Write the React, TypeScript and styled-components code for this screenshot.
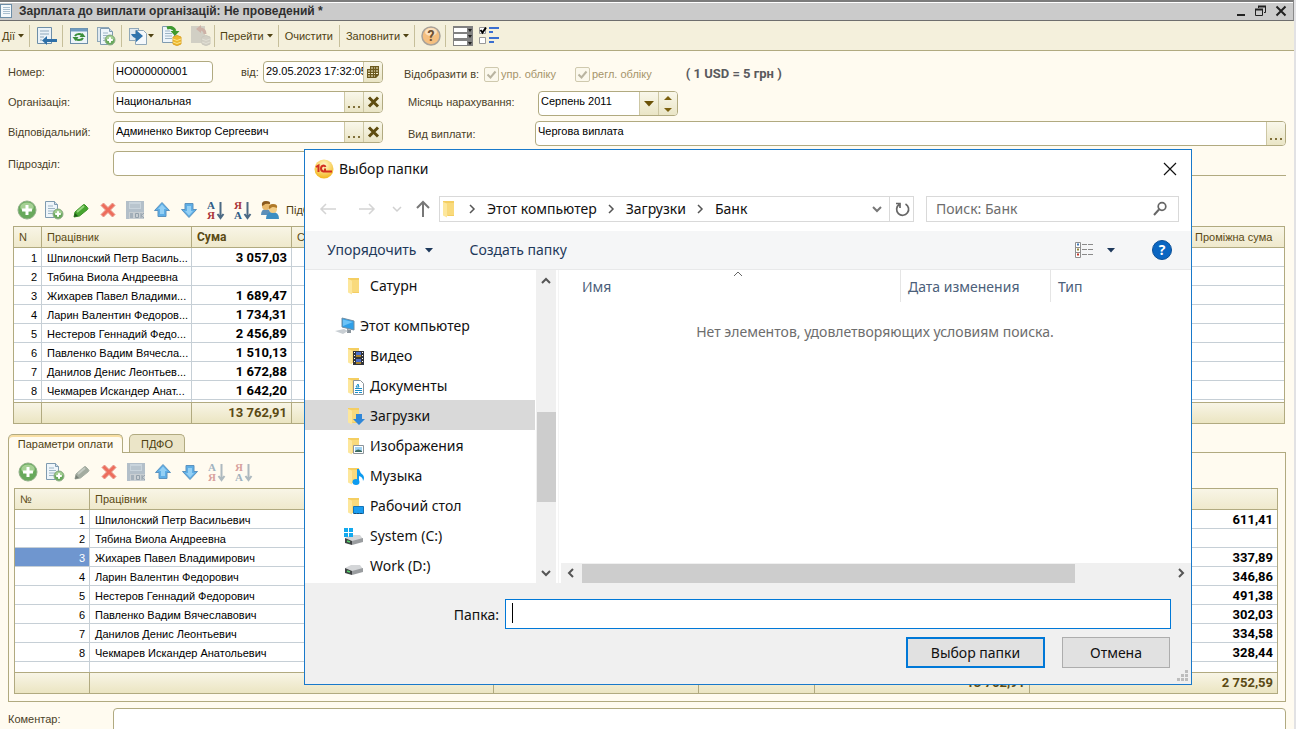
import React from "react";
import styled, { createGlobalStyle } from "styled-components";

const ui = `"Liberation Sans", Arial, sans-serif`;
const figures = `Roboto, "Liberation Sans", sans-serif`;
const shell = `"Noto Sans", "Open Sans", sans-serif`;
const line = "#b1aa80";

const Global = createGlobalStyle`
  *, *::before, *::after { box-sizing: border-box; }
  body { margin: 0; overflow: hidden; background: #fffbf0; }
  button, input { font: inherit; color: inherit; margin: 0; border-radius: 0; }
  button { padding: 0; border: 0; background: none; }
`;

const Window = styled.main`
  position: relative;
  min-height: 100vh;
  max-height: 100vh;
  overflow: hidden;
  background: #fffbf0;
  border-right: 2px solid #e2e2e4;
  font: 11px/14px ${ui};
  color: #4a4128;
`;

const TitleBar = styled.header`
  display: flex;
  align-items: center;
  height: 21px;
  padding: 0 2px 0 0;
  background: #cbcbcb;
  border-top: 2px solid #7c7c7c;
  border-bottom: 1px solid #6e6e6e;
  border-right: 1px solid #8a8a8a;
  box-shadow: inset 0 1px #fff;
  h1 { flex: 1; margin: 0 0 0 6px; font: bold 12px/16px ${ui}; color: #2f2f2f; }
`;

const WindowButton = styled.button`
  display: flex;
  width: 20px;
  height: 16px;
  align-items: center;
  justify-content: center;
`;

const MainToolbar = styled.nav`
  display: flex;
  align-items: center;
  height: 30px;
  padding-left: 2px;
  background: #f4f0dc;
  border-bottom: 1px solid ${line};
`;

const Tool = styled.button<{ $w?: number; $dim?: boolean }>`
  display: flex;
  align-items: center;
  justify-content: center;
  width: ${(p) => (p.$w ? `${p.$w}px` : "auto")};
  height: 24px;
  opacity: ${(p) => (p.$dim ? 0.45 : 1)};
  white-space: nowrap;
  color: #4f4212;
  svg { flex: none; }
`;

const Split = styled.span<{ $l: number; $r: number }>`
  width: 1px;
  height: 22px;
  margin: 0 ${(p) => p.$r}px 0 ${(p) => p.$l}px;
  background: #c6bf9a;
`;

const Form = styled.form`
  padding: 10px 8px 0;
`;

const FormRow = styled.div`
  display: flex;
  align-items: flex-start;
  height: 30px;
`;

const Label = styled.label<{ $w: number; $tall?: boolean; $gap?: number }>`
  flex: none;
  width: ${(p) => p.$w}px;
  margin-left: ${(p) => p.$gap || 0}px;
  line-height: ${(p) => (p.$tall ? 26 : 22)}px;
  white-space: nowrap;
`;

const Field = styled.div<{ $w?: number; $tall?: boolean }>`
  display: flex;
  flex: ${(p) => (p.$w ? "none" : "1")};
  width: ${(p) => (p.$w ? `${p.$w}px` : "auto")};
  height: ${(p) => (p.$tall ? 25 : 22)}px;
  background: #fff;
  border: 1px solid ${line};
  border-radius: 4px;
  overflow: hidden;
  input {
    flex: 1;
    min-width: 0;
    width: 100%;
    height: 18px;
    padding: 0 0 0 2px;
    border: 0;
    outline: 0;
    background: none;
    color: #000;
  }
`;

const FieldButton = styled.button<{ $w?: number }>`
  flex: none;
  display: flex;
  flex-direction: column;
  align-items: center;
  justify-content: center;
  width: ${(p) => p.$w || 19}px;
  background: linear-gradient(#f9f7ea, #eae5c6);
  border-left: 1px solid #cdc7a4;
`;

const Check = styled.label<{ $gap: number }>`
  display: flex;
  align-items: center;
  height: 26px;
  margin-left: ${(p) => p.$gap}px;
  color: #a5946a;
  white-space: nowrap;
  input {
    appearance: none;
    width: 15px;
    height: 15px;
    margin: 0 2px 0 0;
    border: 1px solid #cfc9ae;
    border-radius: 2px;
    background: #fbf8ec;
  }
  span { position: relative; display: flex; }
  svg { position: absolute; left: 2px; top: 3px; }
`;

const Rate = styled.strong`
  margin-left: 34px;
  font: bold 13px/26px ${figures};
  color: #5a5a5e;
`;

const GroupLine = styled.div`
  flex: 1;
  height: 25px;
  border-bottom: 1px solid ${line};
`;

const GridToolbar = styled.div<{ $h: number; $top: number; $left: number }>`
  display: flex;
  align-items: center;
  height: ${(p) => p.$h}px;
  padding: ${(p) => p.$top}px 0 0 ${(p) => p.$left}px;
`;

const DataTable = styled.table`
  width: 100%;
  table-layout: fixed;
  border-collapse: separate;
  border-spacing: 0;
  border: 1px solid ${line};
  background: #fff;
  color: #000;
  th, td {
    padding: 0 4px 0 5px;
    overflow: hidden;
    white-space: nowrap;
    text-align: left;
    border-right: 1px solid #c6cfd6;
  }
  th:last-child, td:last-child { border-right: 0; }
  th {
    height: 21px;
    font-weight: normal;
    color: #5b4a14;
    background: linear-gradient(#f8f5e6, #efe9cc);
    border-color: ${line};
    border-bottom: 1px solid ${line};
  }
  th.strong { font: bold 12px/14px ${figures}; }
  tbody td { height: 19px; padding-top: 2px; line-height: 16px; border-bottom: 1px solid #c6cfd6; }
  td.num { text-align: right; }
  td.sum { text-align: right; font-weight: bold; font-size: 13px; font-family: ${figures}; }
  td.picked { color: #fff; background: #6f96cf; }
  tfoot td {
    height: 21px;
    line-height: 20px;
    border-top: 1px solid ${line};
    border-color: ${line};
    background: linear-gradient(#f8f5e6, #ebe5c2);
    color: #5b4a14;
  }
`;

const Filler = styled.tr<{ $h: number }>`
  && td { height: ${(p) => p.$h}px; line-height: 1px; border-bottom: 0; padding: 0; }
`;

const GridArea = styled.section`
  padding: 0 9px 0 13px;
`;

const Tabs = styled.div`
  display: flex;
  align-items: flex-end;
  gap: 6px;
  height: 29px;
  margin: 0 8px -1px;
`;

const Tab = styled.button<{ $on?: boolean; $w: number }>`
  position: relative;
  width: ${(p) => p.$w}px;
  height: ${(p) => (p.$on ? 19 : 18)}px;
  margin-bottom: ${(p) => (p.$on ? 0 : 1)}px;
  border: 1px solid ${line};
  border-bottom: 0;
  border-radius: 5px 5px 0 0;
  background: ${(p) => (p.$on ? "#fffbf0" : "#ebe5c8")};
  box-shadow: ${(p) => (p.$on ? "inset 0 2px #f9dfa4" : "none")};
  color: #4f4212;
`;

const TabPanel = styled.section`
  margin: 0 8px;
  padding: 0 7px 7px 5px;
  border: 1px solid ${line};
`;

const Comment = styled.div`
  display: flex;
  padding: 6px 8px 0;
`;

/* Folder dialog */

const Dialog = styled.div`
  position: absolute;
  top: 149px;
  left: 304px;
  right: 102px;
  display: flex;
  flex-direction: column;
  background: #fff;
  border: 1px solid #1979ca;
  font: 14px/20px ${shell};
  color: #111;
`;

const DialogTitle = styled.div`
  display: flex;
  align-items: center;
  height: 37px;
  padding: 0 14px 0 9px;
  h2 { flex: 1; margin: 0 0 0 5px; font: inherit; }
`;

const IconButton = styled.button<{ $w: number; $gap?: number }>`
  display: flex;
  flex: none;
  align-items: center;
  justify-content: center;
  width: ${(p) => p.$w}px;
  height: 24px;
  margin-left: ${(p) => p.$gap || 0}px;
`;

const NavRow = styled.div`
  display: flex;
  align-items: center;
  height: 44px;
  padding: 0 12px;
`;

const Address = styled.div`
  display: flex;
  align-items: center;
  flex: 1;
  height: 26px;
  margin-left: 7px;
  padding-left: 2px;
  border: 1px solid #d9d9d9;
  color: #111;
`;

const Crumb = styled.button`
  display: flex;
  align-items: center;
  white-space: nowrap;
  svg { margin: 0 9px 0 8px; }
`;

const Refresh = styled(IconButton)`
  border-left: 1px solid #d9d9d9;
`;

const Search = styled.label`
  display: flex;
  align-items: center;
  width: 253px;
  height: 26px;
  margin-left: 12px;
  padding: 0 10px 0 9px;
  border: 1px solid #d9d9d9;
  input { flex: 1; min-width: 0; padding: 0; border: 0; outline: 0; }
  input::placeholder { color: #6d6d6d; opacity: 1; }
`;

const CommandBar = styled.div`
  display: flex;
  align-items: center;
  height: 39px;
  padding: 0 18px 0 22px;
  background: #f5f6f7;
  border-bottom: 1px solid #e8e9ea;
  color: #1e395b;
`;

const Command = styled.button`
  display: flex;
  align-items: center;
  gap: 8px;
  margin-right: 37px;
`;

const Spacer = styled.span`
  flex: 1;
`;

const DialogBody = styled.div`
  display: flex;
  height: 313px;
`;

const Tree = styled.ul`
  flex: none;
  width: 231px;
  margin: 0;
  padding: 0 1px 0 0;
  list-style: none;
`;

const TreeItem = styled.li<{ $root?: boolean; $on?: boolean; $drive?: boolean }>`
  display: flex;
  align-items: center;
  height: 30px;
  margin-top: ${(p) => (p.$root ? 10 : 0)}px;
  padding-top: 2px;
  padding-left: ${(p) => (p.$root ? 30 : p.$drive ? 39 : 42)}px;
  gap: ${(p) => (p.$root ? 5 : p.$drive ? 6 : 5)}px;
  background: ${(p) => (p.$on ? "#d9d9d9" : "transparent")};
`;

const VScroll = styled.div`
  display: flex;
  flex: none;
  flex-direction: column;
  align-items: center;
  width: 20px;
  padding: 5px 0 4px;
  background: #f0f0f0;
`;

const VTrack = styled.div`
  flex: 1;
  width: 19px;
  padding-top: 125px;
  &::before { content: ""; display: block; height: 90px; background: #cdcdcd; }
`;

const List = styled.div`
  display: flex;
  flex: 1;
  flex-direction: column;
  min-width: 0;
  margin-left: 2px;
  border-left: 1px solid #f4f4f4;
`;

const ListHead = styled.div`
  position: relative;
  display: flex;
  height: 32px;
  color: #4c607a;
  button { text-align: left; height: 32px; padding: 2px 0 0 7px; border-right: 1px solid #e5e5e5; }
  button:first-child { flex: 1; padding-left: 23px; }
  button:last-of-type { border-right: 0; }
  svg { position: absolute; left: 174px; top: 1px; }
`;

const HeadCell = styled.button<{ $w?: number }>`
  width: ${(p) => (p.$w ? `${p.$w}px` : "auto")};
`;

const Empty = styled.p`
  flex: 1;
  margin: 0;
  padding-top: 20px;
  text-align: center;
  color: #6d6d6d;
`;

const HScroll = styled.div`
  display: flex;
  align-items: center;
  height: 20px;
  margin-left: 2px;
  padding: 0 4px;
  background: #f0f0f0;
`;

const HTrack = styled.div`
  flex: 1;
  margin: 0 6px 0 5px;
  &::before { content: ""; display: block; width: 84%; height: 19px; background: #cdcdcd; }
`;

const Footer = styled.div`
  position: relative;
  padding: 16px 20px 16px 22px;
  background: #f0f0f0;
  > svg { position: absolute; right: 2px; bottom: 2px; }
`;

const FolderRow = styled.div`
  display: flex;
  align-items: center;
  label { width: 172px; padding-top: 2px; text-align: right; }
`;

const FolderField = styled.span`
  position: relative;
  flex: 1;
  margin-left: 6px;
  input { display: block; width: 100%; height: 30px; padding: 0 6px; border: 1px solid #0078d7; background: #fff; outline: 0; }
  &::after { content: ""; position: absolute; left: 7px; top: 4px; width: 1px; height: 20px; background: #000; }
`;

const Actions = styled.div`
  display: flex;
  justify-content: flex-end;
  gap: 17px;
  margin: 8px 1px 0 0;
`;

const Action = styled.button<{ $main?: boolean }>`
  width: ${(p) => (p.$main ? 139 : 108)}px;
  height: 31px;
  background: #e1e1e1;
  border: ${(p) => (p.$main ? "2px solid #0078d7" : "1px solid #adadad")};
`;

/* Icons */

const Svg = ({ w = 20, h = 20, children }: { w?: number; h?: number; children: React.ReactNode }) => (
  <svg width={w} height={h} viewBox={`0 0 ${w} ${h}`} fill="none" aria-hidden="true">{children}</svg>
);

const Caret = () => <Svg w={6} h={4}><path d="M0 0h6L3 3.500z" fill="#4f4212" /></Svg>;

const Paper = ({ x = 0, y = 0 }) => (
  <g transform={`translate(${x} ${y})`}>
    <path d="M.5.5h9l3 3v13H.5z" fill="#eef5fa" stroke="#7f9bb0" />
    <path d="M9.500.5v3h3" fill="#cfdde8" stroke="#7f9bb0" />
    <path d="M3 5h5M3 7.500h7M3 10h7M3 12.500h7" stroke="#9db5c6" />
  </g>
);

const PlusDot = ({ x = 10, y = 10, r = 9 }) => (
  <g>
    <circle cx={x} cy={y} r={r} fill="#68a95c" stroke="#92b08a" />
    <ellipse cx={x} cy={y - r / 3} rx={r * 0.75} ry={r * 0.5} fill="#a5d094" />
    <path d={`M${x - r * 0.55} ${y}h${r * 1.1}M${x} ${y - r * 0.55}v${r * 1.1}`} stroke="#fff" strokeWidth={r > 6 ? 3 : 2} />
  </g>
);

const DocIcon = () => <Svg w={13} h={15}><rect x=".5" y=".5" width="11" height="13" fill="#f4f9fc" stroke="#6d8ea8" /><path d="M3 3.500h7M3 5.500h7M3 7.500h7M3 9.500h7" stroke="#a9bfd0" /></Svg>;
const AddIcon = () => <Svg><PlusDot /></Svg>;
const CopyIcon = () => <Svg><Paper x={1} y={1} /><PlusDot x={14} y={14} r={5} /></Svg>;
const CopyStack = () => <Svg><rect x="1.500" y="1.500" width="11" height="14" fill="#dfe9f0" stroke="#8fa7b8" /><Paper x={4} y={2} /><PlusDot x={14} y={14} r={5} /></Svg>;
const PencilIcon = ({ grey }: { grey?: boolean }) => (
  <Svg>
    <path d="M3 17l1-5 8-7q1-1 2 0l2.500 2.500q1 1 0 2l-8 6.500z" fill={grey ? "#a3aca0" : "#47a52f"} stroke={grey ? "#a3aca0" : "#3c9127"} />
    <path d="M6 12l7-6" stroke={grey ? "#c5cbc3" : "#93d47a"} strokeWidth="2" />
    <path d="M3 17l1-4 3 3z" fill={grey ? "#777f76" : "#1f5a1b"} />
  </Svg>
);
const DeleteIcon = () => <Svg><path d="M3 5.500L5.500 3 10 7.500 14.500 3 17 5.500 12.500 10l4.500 4.500-2.500 2.500-4.500-4.500L5.500 17 3 14.500 7.500 10z" fill="#ee6d5c" stroke="#e79a8e" /></Svg>;
const SaveIcon = () => (
  <Svg>
    <path d="M1 1h18v18H1z" fill="#b3bfc9" /><path d="M4 2h12v7H4z" fill="#c9d4dc" /><path d="M5 5h10M5 7h10" stroke="#a9b6c0" />
    <path d="M4 12h15v7H4z" fill="#c8ced2" /><path d="M5 13h3v5H5z" fill="#a4b0ba" />
    <path d="M10.500 13.500h3v4h-3zM16 13v5M19 13l-3 2.500 3 2.500" stroke="#93a0ab" />
  </Svg>
);
const Arrow = ({ down }: { down?: boolean }) => (
  <Svg>
    <g transform={down ? "rotate(180 10 10)" : undefined}>
      <path d="M10 2.500l7.500 8h-3.500v6H6v-6H2.500z" fill="#5eaee6" stroke="#5c93bf" />
      <path d="M10 4.500l4 4.500H12v5H8V9H6z" fill="#94d0f5" />
    </g>
  </Svg>
);
const SortIcon = ({ desc }: { desc?: boolean }) => (
  <Svg h={24}>
    <g fontFamily="Liberation Serif" fontWeight="bold" fontSize="11" textAnchor="middle">
      <text x="5" y="11" fill={desc ? "#a93438" : "#2d5c86"}>{desc ? "Я" : "А"}</text>
      <text x="5" y="21" fill={desc ? "#2d5c86" : "#a93438"}>{desc ? "А" : "Я"}</text>
    </g>
    <path d="M14.500 4v16M11.500 16l3 4 3-4" stroke="#4c6a84" strokeWidth="2" />
  </Svg>
);
const PeopleIcon = () => (
  <Svg>
    <path d="M1 15q0-6 5-6t5 6z" fill="#5d8fb8" /><circle cx="6" cy="6" r="4" fill="#e9b96b" /><path d="M2 6q-1-5 4-5t4 3q-5-1-6 1z" fill="#8a5a1e" />
    <path d="M6 19q0-7 6.500-7t6.500 7z" fill="#3d8ec2" /><circle cx="13" cy="9" r="4" fill="#f3cd86" /><path d="M9 9q-1-5 4-5t4 4q-5-2-6 0z" fill="#b07a2a" />
  </Svg>
);
const PostIcon = ({ grey }: { grey?: boolean }) => (
  <Svg w={21} h={21}>
    {grey && <path d="M1 1h14v17H1z" fill="#a8a8a8" />}
    {!grey && <Paper x={1} y={1} />}
    <path d={grey ? "M15 9q0-5-5-5" : "M6 3q6-2 8 3"} stroke={grey ? "#a06868" : "#3f9a2f"} strokeWidth="3" />
    <path d={grey ? "M11 0v8L6 4z" : "M9.500 6h9L14 11z"} fill={grey ? "#a06868" : "#3f9a2f"} />
    <path d="M12 12q4-3 8 0v7q-4 3-8 0z" fill={grey ? "#a9a9a9" : "#edb92e"} stroke={grey ? "#999" : "#dca52a"} />
    <path d="M12 14q4 3 8 0M12 17q4 3 8 0" stroke={grey ? "#ccc" : "#fbe48b"} />
  </Svg>
);
const GoIcon = () => <Svg w={20}><rect x="1.500" y="2.500" width="9" height="12" fill="#dfe9f0" stroke="#8fa7b8" /><path d="M7.500 4.500h8l3 3v11h-11z" fill="#f4f8fb" stroke="#8fa7b8" /><path d="M3 8h5V4l7 6-7 6v-4Q5 12 3 8z" fill="#2f73ac" /></Svg>;
const BackDoc = () => <Svg w={21}><path d="M1.500 1.500h14v16h-14z" fill="#eaf2f8" stroke="#6d8ea8" /><path d="M4 5h9M4 8h9M4 11h4M4 14h2" stroke="#90a9bc" /><path d="M6 14.500l5-4.500v3h10v3H11v3z" fill="#2e6fa7" /></Svg>;
const ReloadDoc = () => <Svg><rect x="1.500" y="2.500" width="17" height="15" fill="#edf4f9" stroke="#6d8ea8" /><path d="M2 4h16" stroke="#6f9cc0" strokeWidth="3" /><path d="M6 10q1-2 4-2 2 0 3 1M14 12q-1 2-4 2-2 0-3-1" stroke="#3c8f3c" strokeWidth="2" /><path d="M10.500 11h6l-3-4zM9.500 11h-6l3 4z" fill="#3c8f3c" /></Svg>;
const HelpIcon = () => <Svg><circle cx="10" cy="10" r="9" fill="#f5bf80" stroke="#a8a29a" strokeWidth="1.500" /><ellipse cx="10" cy="6" rx="6" ry="4" fill="#fbe0bd" /><text x="10" y="15" fontSize="14" fontWeight="bold" fontFamily="Roboto" textAnchor="middle" fill="#6e5032">?</text></Svg>;
const RowsIcon = () => <Svg><path d="M0 0h20v20H0z" fill="#818181" />{[1, 7, 14].map((y) => <g key={y}><path d={`M1 ${y + 1}h13v4H1z`} fill="#fff" /><path d={`M15 ${y + 2}h4l-2 3z`} fill="#222" /></g>)}</Svg>;
const ChecksIcon = () => <Svg w={21}><path d="M.5 1.500h6v6h-6zM.5 11.500h6v6h-6z" fill="#fff" stroke="#999" /><path d="M1.500 4l2 2.500 3.500-5" stroke="#000" strokeWidth="2" /><path d="M10 2h10M10 6h4M10 12h10M10 16h5" stroke="#3b6fd0" strokeWidth="2" /></Svg>;
const Cross = () => <Svg w={13} h={12}><path d="M2 1.500l9 9M11 1.500l-9 9" stroke="#5f4c10" strokeWidth="3" /></Svg>;
const CalendarIcon = () => <Svg w={14} h={14}><path d="M4 1h9v9l-3 3H1V4h3z" fill="#6d5a1e" /><path d="M5 3h2M8 3h1M10 3h2M2 6h2M5 6h2M8 6h1M10 6h2M2 8.500h2M5 8.500h2M8 8.500h1M10 8.500h2M2 11h2M5 11h2M8 11h1" stroke="#f4efcf" /></Svg>;
const Dots = () => <Svg w={14} h={20}><path d="M1 14h2v2H1zM6 14h2v2H6zM11 14h2v2h-2z" fill="#80703a" /></Svg>;

const Folder = () => <><path d="M1 1h7l4 0v15H6L1 14z" fill="#f4ce62" /><path d="M1 2l4 1.500v14L1 15.500z" fill="#fde79c" /><path d="M5 3h7v12H5z" fill="#f9da7c" /></>;
const overlays: Record<string, React.ReactNode> = {
  video: <g><path d="M6 4h11v14H6z" fill="#32343a" /><path d="M9 5h5v5H9z" fill="#4a6ecb" /><path d="M9 12h5v5H9z" fill="#4a6ecb" /><path d="M9 8h5v2H9zM9 15h5v2H9z" fill="#a6802a" /><path d="M7.500 5v12M15.500 5v12" stroke="#fff" strokeDasharray="1 2" /></g>,
  docs: <g><path d="M6.500 3.500h7l3 3v11h-10z" fill="#fff" stroke="#8d959b" /><path d="M11 7l-2 3h3zM8 11.500h7M8 13.500h7M8 15.500h3M12 15.500h3" stroke="#1b8fc9" /></g>,
  down: <path d="M9 7h6v5h3l-6 6-6-6h3z" fill="#2f87d8" />,
  pics: <g><path d="M6.500 8.500h10v8h-10z" fill="#fff" stroke="#8d959b" /><path d="M8 10h7v5H8z" fill="#9fd2f2" /><path d="M8 14q3-3 7 0v1H8z" fill="#3c6c62" /></g>,
  music: <g fill="#0d9bf0"><ellipse cx="9" cy="15" rx="3.500" ry="3" /><path d="M10 2h2q1 4 4 6 2 3 0 6 0-4-4-5v6h-2z" /></g>,
  desk: <g><path d="M6.500 9.500h10v7h-10z" fill="#1b9df0" stroke="#1474b6" /><path d="M7 16.500h9" stroke="#184f78" strokeDasharray="2 1" /></g>,
};
const FolderIcon = ({ kind = "", w = 18 }) => <Svg w={w} h={19}><Folder />{overlays[kind]}</Svg>;
const ComputerIcon = () => <Svg w={20} h={18}><path d="M7 1l12 3v9L7 10z" fill="#2f9fe8" stroke="#6f8da3" /><path d="M8 2.500l10 2.500-10 4z" fill="#6cc3f7" /><path d="M12 12l4 1v3h-4z" fill="#8a949c" /><path d="M0 14l9-2 4 2-5 3z" fill="#c8ced3" /></Svg>;
const DriveIcon = ({ win }: { win?: boolean }) => <Svg w={20} h={19}><path d="M1 11l6-3h9l3 4-11 3z" fill="#d4d6d8" /><path d="M1 11l7 3v4l-7-2z" fill="#3f4244" /><path d="M8 14l11-3v4L8 18z" fill="#9a9da0" /><path d="M3 14l3 1" stroke="#54d36b" strokeWidth="1.500" />{win && <path d="M0 1h4v4H0zM5 1h4v4H5zM0 6h4v4H0zM5 6h4v4H5z" fill="#13a9ee" />}</Svg>;
const LogoIcon = () => <Svg><defs><radialGradient id="disc" cx=".5" cy=".3" r=".7"><stop stopColor="#fffbd0" /><stop offset="1" stopColor="#f3b61b" /></radialGradient></defs><circle cx="10" cy="10" r="9.500" fill="url(#disc)" /><path d="M2 8l2.500-1.500V13M11.500 8Q11 6.500 9.500 6.500 7 7 7 9.500T9.500 12.500H18M12 10.500h-2" stroke="#d3301f" strokeWidth="2" /></Svg>;
const Chevron = ({ dir, c = "#555", s = 1.5 }: { dir: "up" | "down" | "left" | "right"; c?: string; s?: number }) => {
  const turn = { up: 0, right: 90, down: 180, left: 270 }[dir];
  return <Svg w={12} h={12}><path d="M2 8l4-4 4 4" transform={`rotate(${turn} 6 6)`} stroke={c} strokeWidth={s} /></Svg>;
};

/* Data */

const staff = [
  ["Шпилонский Петр Василь...", "Шпилонский Петр Васильевич", "3 057,03", "611,41"],
  ["Тябина Виола Андреевна", "Тябина Виола Андреевна", "", ""],
  ["Жихарев Павел Владими...", "Жихарев Павел Владимирович", "1 689,47", "337,89"],
  ["Ларин Валентин Федоров...", "Ларин Валентин Федорович", "1 734,31", "346,86"],
  ["Нестеров Геннадий Федо...", "Нестеров Геннадий Федорович", "2 456,89", "491,38"],
  ["Павленко Вадим Вячесла...", "Павленко Вадим Вячеславович", "1 510,13", "302,03"],
  ["Данилов Денис Леонтьев...", "Данилов Денис Леонтьевич", "1 672,88", "334,58"],
  ["Чекмарев Искандер Анат...", "Чекмарев Искандер Анатольевич", "1 642,20", "328,44"],
];

const folders: [string, string][] = [
  ["video", "Видео"], ["docs", "Документы"], ["down", "Загрузки"],
  ["pics", "Изображения"], ["music", "Музыка"], ["desk", "Рабочий стол"],
];

const GridTools = ({ still }: { still?: boolean }) => (
  <>
    <Tool type="button" $w={27} aria-label="Додати"><AddIcon /></Tool>
    <Tool type="button" $w={27} aria-label="Копіювати"><CopyIcon /></Tool>
    <Tool type="button" $w={27} aria-label="Змінити"><PencilIcon grey={still} /></Tool>
    <Tool type="button" $w={27} aria-label="Видалити"><DeleteIcon /></Tool>
    <Tool type="button" $w={27} aria-label="Зберегти"><SaveIcon /></Tool>
    <Tool type="button" $w={27} aria-label="Вгору"><Arrow /></Tool>
    <Tool type="button" $w={27} aria-label="Вниз"><Arrow down /></Tool>
    <Tool type="button" $w={27} $dim={still} aria-label="За зростанням"><SortIcon /></Tool>
    <Tool type="button" $w={27} $dim={still} aria-label="За спаданням"><SortIcon desc /></Tool>
  </>
);

const PickField = ({ id, value }: { id: string; value: string }) => (
  <Field $w={270}>
    <input id={id} defaultValue={value} />
    <FieldButton type="button" aria-label="Вибрати"><Dots /></FieldButton>
    <FieldButton type="button" aria-label="Очистити"><Cross /></FieldButton>
  </Field>
);

const CheckBox = ({ text, gap }: { text: string; gap: number }) => (
  <Check $gap={gap}>
    <span>
      <input type="checkbox" defaultChecked disabled />
      <Svg w={11} h={9}><path d="M1.500 4.500l3 3 5-6" stroke="#b9b4a0" strokeWidth="2" /></Svg>
    </span>
    {text}
  </Check>
);

const FolderDialog = () => (
  <Dialog role="dialog" aria-labelledby="dlg">
    <DialogTitle>
      <LogoIcon />
      <h2 id="dlg">Выбор папки</h2>
      <IconButton $w={14} aria-label="Закрыть"><Svg w={14} h={14}><path d="M1 1l12 12M13 1L1 13" stroke="#111" strokeWidth="1.200" /></Svg></IconButton>
    </DialogTitle>
    <NavRow>
      <IconButton $w={22} aria-label="Назад"><Svg w={18} h={14}><path d="M17 7H2M7 2L2 7l5 5" stroke="#d4d4d4" strokeWidth="1.500" /></Svg></IconButton>
      <IconButton $w={22} $gap={17} aria-label="Вперед"><Svg w={18} h={14}><path d="M1 7h15M11 2l5 5-5 5" stroke="#d4d4d4" strokeWidth="1.500" /></Svg></IconButton>
      <IconButton $w={14} $gap={12} aria-label="Недавние"><Chevron dir="down" c="#d0d0d0" /></IconButton>
      <IconButton $w={18} $gap={10} aria-label="Вверх"><Svg w={16} h={18}><path d="M8 17V2M2 8l6-6 6 6" stroke="#777" strokeWidth="2" /></Svg></IconButton>
      <Address>
        <FolderIcon w={16} />
        <Crumb><Chevron dir="right" />Этот компьютер</Crumb>
        <Crumb><Chevron dir="right" />Загрузки</Crumb>
        <Crumb><Chevron dir="right" />Банк</Crumb>
        <Spacer />
        <IconButton $w={24} aria-label="Список"><Chevron dir="down" c="#777" s={2} /></IconButton>
        <Refresh $w={24} aria-label="Обновить"><Svg w={16} h={16}><path d="M5 3.500A6 6 0 1 0 11.500 3M2 2.500h4v4.500" stroke="#666" strokeWidth="1.700" /></Svg></Refresh>
      </Address>
      <Search>
        <input aria-label="Поиск" placeholder="Поиск: Банк" />
        <Svg w={16} h={16}><circle cx="10" cy="5.500" r="3.800" stroke="#666" strokeWidth="1.700" /><path d="M7 8.500L2 14" stroke="#666" strokeWidth="2" /></Svg>
      </Search>
    </NavRow>
    <CommandBar>
      <Command>Упорядочить<Svg w={8} h={5}><path d="M0 0h8L4 4.500z" fill="#1e395b" /></Svg></Command>
      <Command>Создать папку</Command>
      <Spacer />
      <IconButton $w={18} aria-label="Вид">
        <Svg w={18} h={17}><path d="M.5.5h5v15h-5zM.5 5.500h5M.5 10.500h5" stroke="#8f8f8f" fill="#fff" /><path d="M7 2.500h5M13 2.500h5M7 7.500h5M13 7.500h5M7 12.500h5M13 12.500h5" stroke="#8a8a8a" /><path d="M2 2.500h2" stroke="#4179b5" strokeWidth="2" /><path d="M2 7.500h2" stroke="#94883a" strokeWidth="2" /><path d="M2 12.500h2" stroke="#c0392b" strokeWidth="2" /></Svg>
      </IconButton>
      <IconButton $w={24} $gap={6} aria-label="Другие виды"><Svg w={8} h={5}><path d="M0 0h8L4 4.500z" fill="#1e395b" /></Svg></IconButton>
      <IconButton $w={22} $gap={28} aria-label="Справка">
        <Svg w={20} h={20}><circle cx="10" cy="10" r="9.500" fill="#0a66c2" stroke="#0c4f96" /><text x="10" y="15" fontSize="14" fontWeight="bold" fontFamily="Open Sans" textAnchor="middle" fill="#fff">?</text></Svg>
      </IconButton>
    </CommandBar>
    <DialogBody>
      <Tree>
        <TreeItem><FolderIcon />Сатурн</TreeItem>
        <TreeItem $root><ComputerIcon />Этот компьютер</TreeItem>
        {folders.map(([kind, name]) => <TreeItem key={kind} $on={kind === "down"}><FolderIcon kind={kind} />{name}</TreeItem>)}
        <TreeItem $drive><DriveIcon win />System (C:)</TreeItem>
        <TreeItem $drive><DriveIcon />Work (D:)</TreeItem>
      </Tree>
      <VScroll><Chevron dir="up" s={2} /><VTrack /><Chevron dir="down" s={2} /></VScroll>
      <List>
        <ListHead>
          <HeadCell>Имя</HeadCell>
          <HeadCell $w={150}>Дата изменения</HeadCell>
          <HeadCell $w={140}>Тип</HeadCell>
          <Svg w={10} h={6}><path d="M1 5l4-4 4 4" stroke="#666" /></Svg>
        </ListHead>
        <Empty>Нет элементов, удовлетворяющих условиям поиска.</Empty>
        <HScroll><Chevron dir="left" s={2} /><HTrack /><Chevron dir="right" s={2} /></HScroll>
      </List>
    </DialogBody>
    <Footer>
      <FolderRow>
        <label htmlFor="folder">Папка:</label>
        <FolderField><input id="folder" /></FolderField>
      </FolderRow>
      <Actions>
        <Action $main>Выбор папки</Action>
        <Action>Отмена</Action>
      </Actions>
      <Svg w={13} h={12}><path d="M9 0h3v3H9zM5 4h3v3H5zM9 4h3v3H9zM1 8h3v3H1zM5 8h3v3H5zM9 8h3v3H9z" fill="#bdbdbd" /></Svg>
    </Footer>
  </Dialog>
);

export default function App() {
  return (
    <Window>
      <Global />
      <TitleBar>
        <DocIcon />
        <h1>Зарплата до виплати організацій: Не проведений *</h1>
        <WindowButton aria-label="Згорнути"><Svg w={10} h={12}><path d="M1 10h8" stroke="#222" strokeWidth="2" /></Svg></WindowButton>
        <WindowButton aria-label="Відновити"><Svg w={12} h={12}><path d="M3.500 3V1.500h7v6H9M.5 4.500h7v6h-7z" stroke="#222" /><path d="M3 1.500h8M0 4.500h8" stroke="#222" strokeWidth="2" /></Svg></WindowButton>
        <WindowButton aria-label="Закрити"><Svg w={12} h={12}><path d="M1.500 1.500l9 9M10.500 1.500l-9 9" stroke="#222" strokeWidth="2" /></Svg></WindowButton>
      </TitleBar>
      <MainToolbar>
        <Tool>Дії&nbsp;<Caret /></Tool>
        <Split $l={5} $r={3} />
        <Tool $w={27} aria-label="Записати"><BackDoc /></Tool>
        <Split $l={2} $r={2} />
        <Tool $w={27} aria-label="Оновити"><ReloadDoc /></Tool>
        <Tool $w={28} aria-label="Копія"><CopyStack /></Tool>
        <Split $l={1} $r={5} />
        <Tool $w={28} aria-label="Перехід"><GoIcon /><Caret /></Tool>
        <Tool $w={32} aria-label="Провести"><PostIcon /></Tool>
        <Tool $w={26} $dim aria-label="Скасувати проведення"><PostIcon grey /></Tool>
        <Split $l={1} $r={5} />
        <Tool>Перейти&nbsp;<Caret /></Tool>
        <Split $l={5} $r={6} />
        <Tool>Очистити</Tool>
        <Split $l={6} $r={6} />
        <Tool>Заповнити&nbsp;<Caret /></Tool>
        <Split $l={5} $r={3} />
        <Tool $w={26} aria-label="Довідка"><HelpIcon /></Tool>
        <Split $l={1} $r={3} />
        <Tool $w={27} aria-label="Список"><RowsIcon /></Tool>
        <Tool $w={27} aria-label="Налаштування"><ChecksIcon /></Tool>
      </MainToolbar>

      <Form>
        <FormRow>
          <Label htmlFor="num" $w={105}>Номер:</Label>
          <Field $w={100}><input id="num" defaultValue="НО000000001" /></Field>
          <Label htmlFor="date" $w={22} $gap={28}>від:</Label>
          <Field $w={120}>
            <input id="date" defaultValue="29.05.2023 17:32:05" />
            <FieldButton type="button" aria-label="Календар"><CalendarIcon /></FieldButton>
          </Field>
          <Label as="span" $w={80} $gap={21} $tall>Відобразити в:</Label>
          <CheckBox text="упр. обліку" gap={0} />
          <CheckBox text="регл. обліку" gap={19} />
          <Rate>( 1 USD = 5 грн )</Rate>
        </FormRow>
        <FormRow>
          <Label htmlFor="org" $w={105}>Організація:</Label>
          <PickField id="org" value="Национальная" />
          <Label htmlFor="month" $w={130} $gap={25}>Місяць нарахування:</Label>
          <Field $w={140} $tall>
            <input id="month" defaultValue="Серпень 2011" />
            <FieldButton type="button" aria-label="Вибрати"><Svg w={10} h={6}><path d="M0 0h10L5 5.500z" fill="#6b5208" /></Svg></FieldButton>
            <FieldButton type="button" aria-label="Змінити місяць"><Svg w={8} h={16}><path d="M0 4h8L4 0zM0 12h8l-4 4z" fill="#7c610f" /></Svg></FieldButton>
          </Field>
        </FormRow>
        <FormRow>
          <Label htmlFor="resp" $w={105}>Відповідальний:</Label>
          <PickField id="resp" value="Админенко Виктор Сергеевич" />
          <Label htmlFor="kind" $w={127} $gap={25} $tall>Вид виплати:</Label>
          <Field $tall>
            <input id="kind" defaultValue="Чергова виплата" />
            <FieldButton type="button" aria-label="Вибрати"><Dots /></FieldButton>
          </Field>
        </FormRow>
        <FormRow>
          <Label htmlFor="dept" $w={105} $tall>Підрозділ:</Label>
          <Field $w={270} $tall><input id="dept" /></Field>
          <GroupLine />
        </FormRow>
      </Form>

      <GridArea>
        <GridToolbar $h={45} $top={13} $left={0}>
          <GridTools />
          <Tool type="button" $w={27} aria-label="Працівники"><PeopleIcon /></Tool>
          <Tool type="button">&nbsp;Підбір</Tool>
        </GridToolbar>
        <DataTable>
          <colgroup><col style={{ width: 28 }} /><col style={{ width: 150 }} /><col style={{ width: 100 }} /><col /><col style={{ width: 94 }} /></colgroup>
          <thead><tr><th>N</th><th>Працівник</th><th className="strong">Сума</th><th>Сума</th><th>Проміжна сума</th></tr></thead>
          <tbody>
            {staff.map((s, i) => <tr key={i}><td className="num">{i + 1}</td><td>{s[0]}</td><td className="sum">{s[2]}</td><td /><td /></tr>)}
            <Filler $h={2} aria-hidden="true"><td /><td /><td /><td /><td /></Filler>
          </tbody>
          <tfoot><tr><td /><td /><td className="sum">13 762,91</td><td /><td /></tr></tfoot>
        </DataTable>
      </GridArea>

      <Tabs role="tablist">
        <Tab role="tab" $on $w={115}>Параметри оплати</Tab>
        <Tab role="tab" $w={56}>ПДФО</Tab>
      </Tabs>
      <TabPanel>
        <GridToolbar $h={35} $top={3} $left={0}><GridTools still /></GridToolbar>
        <DataTable>
          <colgroup><col style={{ width: 75 }} /><col /><col style={{ width: 205 }} /><col style={{ width: 116 }} /><col style={{ width: 215 }} /><col style={{ width: 247 }} /></colgroup>
          <thead><tr><th>№</th><th>Працівник</th><th /><th /><th /><th /></tr></thead>
          <tbody>
            {staff.map((s, i) => <tr key={i}><td className={i === 2 ? "num picked" : "num"}>{i + 1}</td><td>{s[1]}</td><td /><td /><td /><td className="sum">{s[3]}</td></tr>)}
            <Filler $h={10} aria-hidden="true"><td /><td /><td /><td /><td /><td /></Filler>
          </tbody>
          <tfoot><tr><td /><td /><td /><td /><td className="sum">13 762,91</td><td className="sum">2 752,59</td></tr></tfoot>
        </DataTable>
      </TabPanel>

      <Comment>
        <Label htmlFor="note" $w={105}>Коментар:</Label>
        <Field $tall><input id="note" /></Field>
      </Comment>

      <FolderDialog />
    </Window>
  );
}
